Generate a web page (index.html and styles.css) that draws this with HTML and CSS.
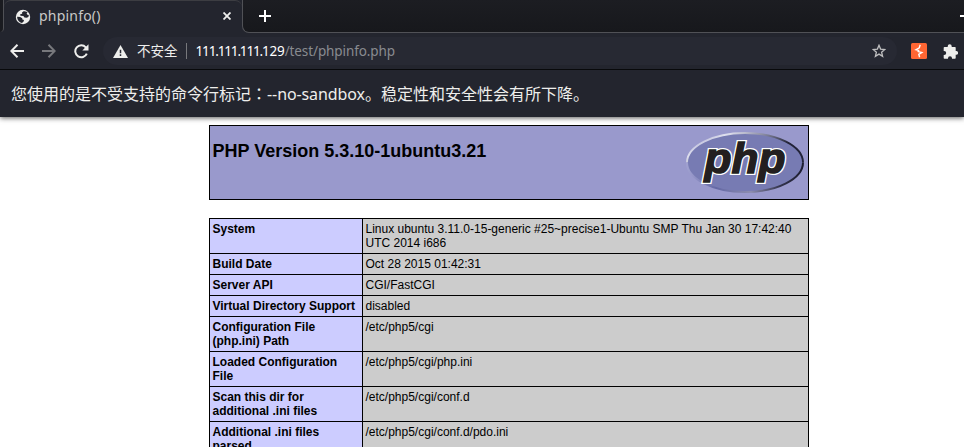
FILE: index.html
```html
<!DOCTYPE html>
<html lang="zh-CN">
<head>
<meta charset="utf-8">
<title>phpinfo()</title>
<link rel="stylesheet" href="styles.css">
</head>
<body>
<header class="browser">
  <div class="tabstrip">
    <div class="edge"></div>
    <div class="tab">
      <svg class="globe" width="16" height="16" viewBox="0 0 16 16"><circle cx="8" cy="8" r="7.200" fill="#eeeeec"/><path d="M8.600 2.200 7 3.400l.2 1.400-2 .4.2 1.600 3 .1 1 1.600 2.200.2 1.800-.8.4-2-1.400-.2-.8-1.400 1-1C11 2.500 9.700 2.200 8.600 2.200zM2.100 7.800 5.200 8l2 1.200.2 1.400 1.600.4-.4 1.400-1.600 1.500C4 13.400 2.100 11 2.100 7.800z" fill="#23252e"/></svg>
      <span class="tab-title">phpinfo()</span>
      <svg class="close" width="8" height="8" viewBox="0 0 8 8"><path d="M.5.5l7 7m0-7l-7 7" stroke="#eeeeec" stroke-width="1.800"/></svg>
    </div>
    <div class="strip-rest">
      <svg class="plus" width="12" height="12" viewBox="0 0 12 12"><path d="M6 0v12M0 6h12" stroke="#fff" stroke-width="2"/></svg>
      <i class="minimize"></i>
    </div>
  </div>
  <nav class="toolbar">
    <svg class="back" width="14" height="14" viewBox="0 0 14 14"><path d="M14 7H1.500M7.500.8 1.300 7l6.200 6.200" fill="none" stroke="#eeeeec" stroke-width="2"/></svg>
    <svg class="forward" width="14" height="14" viewBox="0 0 14 14"><path d="M0 7h12.500M6.500.8 12.700 7l-6.200 6.200" fill="none" stroke="#77787c" stroke-width="2"/></svg>
    <svg class="reload" width="15" height="15" viewBox="0 0 15 15"><path d="M12.800 9.600A6 6 0 1 1 11.800 3.300L13 4.500" fill="none" stroke="#eeeeec" stroke-width="2"/><path d="M14.500.2v6.200H8.300z" fill="#eeeeec"/></svg>
    <div class="omnibox">
      <svg class="warning" width="15" height="13" viewBox="0 0 15 13"><path d="M7.500 0 15 13H0z" fill="#eeeeec"/><path d="M7.500 4.800v3.400M7.500 9.300v1.700" stroke="#272933" stroke-width="1.500"/></svg>
      <span class="secure">不安全</span>
      <i class="divider"></i>
      <span class="host">111.111.111.<b>129</b></span><span class="path">/test/phpinfo.php</span>
      <svg class="star" width="14" height="14" viewBox="0 0 14 14"><path d="M7 1.300 8.600 5.100 12.800 5.500 9.600 8.200 10.600 12.300 7 10.100 3.400 12.300 4.400 8.200 1.200 5.500 5.400 5.100z" fill="none" stroke="#bfbfc0" stroke-width="1.300"/></svg>
    </div>
    <svg class="burp" width="16" height="16" viewBox="0 0 16 16"><rect width="16" height="16" rx="1.500" fill="#ff6633"/><path d="M9.200 1.800 8.300 4.800 5 6.700 7.600 7.400 7.200 8.600 10.800 9.500 7.800 11.300 8.600 14.200" fill="none" stroke="#fff" stroke-width="1.400"/></svg>
    <svg class="puzzle" width="15" height="15" viewBox="0 0 15 15"><path d="M1.500 3H4.700V2.200a2 2 0 0 1 4 0V3H12q.7 0 .7.800V7h.5a1.900 1.900 0 0 1 0 3.800h-.5v3.200q0 .8-.8.800H9v-.5a2 2 0 0 0-4 0v.5H1.500q-.8 0-.8-.8V11h.5a2 2 0 0 0 0-4H.7V3.800q0-.8.800-.8z" fill="#eeeeec"/></svg>
  </nav>
  <div class="infobar">您使用的是不受支持的命令行标记<span class="colon" lang="ja">：</span><span class="flag">--no-sandbox</span>。稳定性和安全性会有所下降。</div>
</header>
<main class="page">
  <section class="banner">
    <h1>PHP Version 5.3.10-1ubuntu3.21</h1>
    <svg class="logo" width="120" height="67" viewBox="0 0 120 67">
      <defs>
        <linearGradient id="rim" x1="0" y1="0" x2="1" y2=".45"><stop offset="0" stop-color="#8688bd"/><stop offset=".3" stop-color="#dfe0ee"/><stop offset=".58" stop-color="#85879f"/><stop offset=".85" stop-color="#222338"/><stop offset="1" stop-color="#222338"/></linearGradient>
        <linearGradient id="rim-low" x1="0" y1="0" x2="1" y2="0"><stop offset="0" stop-color="#a0a1d0"/><stop offset=".25" stop-color="#6468a5"/><stop offset=".55" stop-color="#8c8dae"/><stop offset=".8" stop-color="#33344d"/><stop offset="1" stop-color="#1c1d30"/></linearGradient>
        <text id="wordmark" class="logo-text" x="19.500" y="43.500" textLength="81" lengthAdjust="spacingAndGlyphs">php</text>
      </defs>
      <ellipse cx="60" cy="33.500" rx="58" ry="29.500" fill="#777bb3"/>
      <path d="M2 33.500a58 29.500 0 0 1 116 0" fill="none" stroke="url(#rim)" stroke-width="2"/>
      <path d="M2 33.500a58 29.500 0 0 0 116 0" fill="none" stroke="url(#rim-low)" stroke-width="2"/>
      <use href="#wordmark" class="logo-outline"/>
      <use href="#wordmark" class="logo-fill"/>
    </svg>
  </section>
  <table class="info">
    <tr><th>System</th><td>Linux ubuntu 3.11.0-15-generic #25~precise1-Ubuntu SMP Thu Jan 30 17:42:40 UTC 2014 i686</td></tr>
    <tr><th>Build Date</th><td>Oct 28 2015 01:42:31</td></tr>
    <tr><th>Server API</th><td>CGI/FastCGI</td></tr>
    <tr><th>Virtual Directory Support</th><td>disabled</td></tr>
    <tr><th>Configuration File (php.ini) Path</th><td>/etc/php5/cgi</td></tr>
    <tr><th>Loaded Configuration File</th><td>/etc/php5/cgi/php.ini</td></tr>
    <tr><th>Scan this dir for additional .ini files</th><td>/etc/php5/cgi/conf.d</td></tr>
    <tr><th>Additional .ini files parsed</th><td>/etc/php5/cgi/conf.d/pdo.ini</td></tr>
  </table>
</main>
</body>
</html>
```

FILE: styles.css
```css
* { box-sizing: border-box; }
html, body { margin: 0; height: 447px; overflow: hidden; background: #fff; }
body { display: flex; flex-direction: column; }
svg { display: block; flex: none; }

.browser {
  flex: none;
  background: #23252e;
  color: #eeeeec;
  font-family: "Noto Sans", "Noto Sans CJK SC", sans-serif;
  box-shadow: 0 1px 5px rgba(0, 0, 0, .65);
}

.tabstrip { display: flex; height: 33px; background: #23252e; }
.edge {
  width: 4px;
  height: 32px;
  background: #1a1b20;
  border-right: 1px solid #505156;
  border-radius: 0 0 6px 0;
}
.tab {
  width: 238px;
  height: 33px;
  display: flex;
  align-items: center;
  padding: 0 11px 1px 11px;
  border-top: 1px solid #3c3d42;
  border-radius: 7px 7px 0 0;
}
.tab-title { margin-left: 8px; margin-top: -1px; font-size: 14px; letter-spacing: .2px; line-height: 20px; color: #c9c9c8; }
.close { margin-left: auto; margin-top: -1px; }
.strip-rest {
  flex: 1;
  display: flex;
  align-items: center;
  padding-left: 16px;
  background: linear-gradient(#1c1d22, #17181c);
  border-left: 1px solid #505156;
  border-bottom: 1px solid #505156;
  border-bottom-left-radius: 7px;
}
.minimize { width: 4px; height: 2px; margin-left: auto; background: #fff; }

.toolbar { display: flex; align-items: center; height: 37px; padding-left: 10px; border-bottom: 1px solid #08090b; }
.forward { margin-left: 18px; }
.reload { margin-left: 18px; }
.omnibox {
  width: 794px;
  height: 28px;
  margin-left: 14px;
  padding: 0 11px 0 10px;
  display: flex;
  align-items: center;
  border-radius: 14px;
  background: #272933;
  font-size: 13.5px;
  line-height: 20px;
}
.secure { margin-left: 9px; }
.divider { width: 1px; height: 16px; margin: 0 9px 0 8px; background: #77787c; }
.host { color: #fff; letter-spacing: -1.15px; }
.host b { font-weight: 400; letter-spacing: -.2px; }
.path { color: #898b90; letter-spacing: -.1px; }
.star { margin-left: auto; }
.burp { margin-left: 14px; }
.puzzle { margin-left: 16px; }

.infobar { height: 47px; padding: 12px 11px 0; font-size: 16px; line-height: 22px; white-space: nowrap; }
.colon { font-family: "Noto Sans CJK JP", sans-serif; }
.flag { letter-spacing: -.1px; }

.page { width: 600px; margin: 8px 0 0 209px; font-family: "Liberation Sans", sans-serif; color: #000; }
.banner {
  display: flex;
  justify-content: space-between;
  height: 75px;
  padding: 3px 3px 0 2.5px;
  background: #9999cc;
  border: 1px solid #000;
}
.banner h1 { margin: 12px 0 0; font-size: 18px; line-height: 21px; }
.logo-text { font: italic bold 42px "Liberation Sans", sans-serif; }
.logo-outline { fill: #fff; stroke: #fff; stroke-width: 4px; }
.logo-fill { fill: #231f20; stroke: #231f20; stroke-width: 1.4px; }
.info { width: 600px; margin-top: 18px; table-layout: fixed; border-collapse: collapse; font-size: 12px; line-height: 14px; }
.info th, .info td { padding: 3px 3px 3px 2.5px; border: 1px solid #000; text-align: left; vertical-align: top; }
.info th { width: 153px; background: #ccccff; }
.info td { background: #cccccc; }
```
